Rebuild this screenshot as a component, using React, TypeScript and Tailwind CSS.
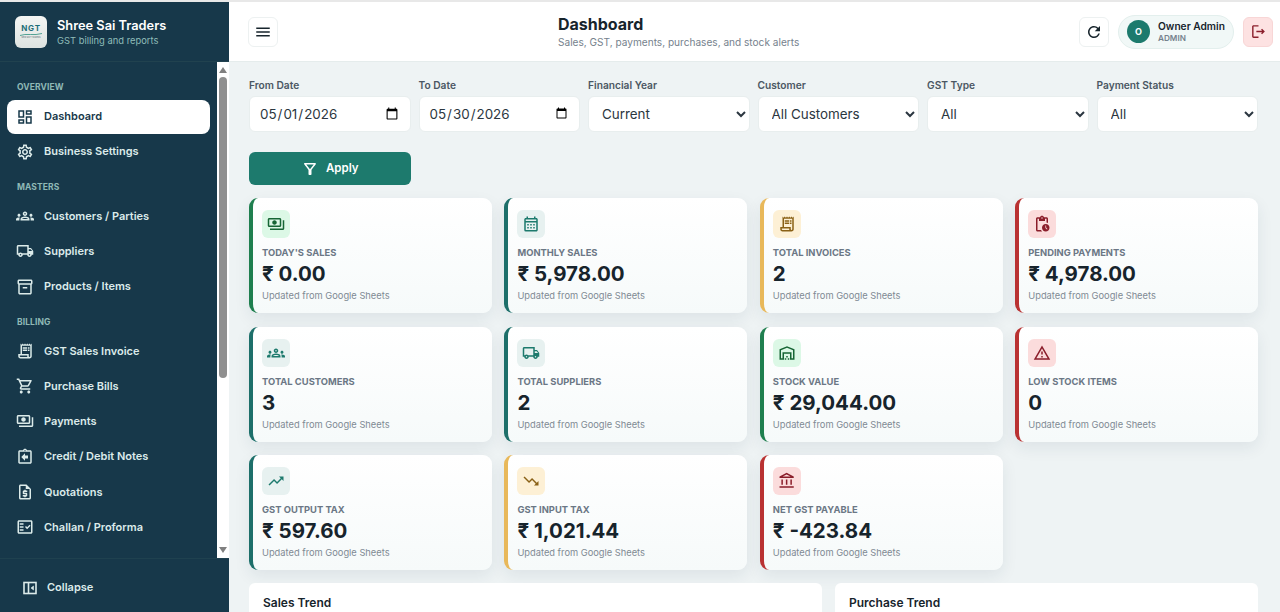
import React from "react";
import {
  MdOutlineDashboard, MdOutlineSettings, MdOutlineGroups, MdOutlineLocalShipping, MdOutlineInventory2,
  MdOutlineReceiptLong, MdOutlineShoppingCart, MdOutlinePayments, MdOutlineAssignmentReturn, MdOutlineRequestQuote,
  MdOutlineFactCheck, MdMenu, MdRefresh, MdOutlineLogout, MdOutlineFilterAlt, MdOutlineCalendarMonth,
  MdOutlinePendingActions, MdOutlineWarehouse, MdOutlineWarningAmber, MdOutlineTrendingUp, MdOutlineTrendingDown,
  MdOutlineAccountBalance,
} from "react-icons/md";

const font = { fontFamily: "Inter, 'Noto Sans', sans-serif" };

function CollapseIcon() {
  return (
    <svg width="16" height="16" viewBox="0 0 16 16" fill="none" stroke="currentColor" strokeWidth="1.6">
      <rect x="2" y="2.5" width="12" height="11" />
      <path d="M6.5 2.5v11" />
      <path d="M11.5 6v4L9 8z" fill="currentColor" strokeWidth="0.6" />
    </svg>
  );
}

type NavItem = { label: string; Icon: React.ComponentType<{ className?: string }>; active?: boolean };

const sections: { title: string; items: NavItem[] }[] = [
  { title: "OVERVIEW", items: [
    { label: "Dashboard", Icon: MdOutlineDashboard, active: true },
    { label: "Business Settings", Icon: MdOutlineSettings },
  ]},
  { title: "MASTERS", items: [
    { label: "Customers / Parties", Icon: MdOutlineGroups },
    { label: "Suppliers", Icon: MdOutlineLocalShipping },
    { label: "Products / Items", Icon: MdOutlineInventory2 },
  ]},
  { title: "BILLING", items: [
    { label: "GST Sales Invoice", Icon: MdOutlineReceiptLong },
    { label: "Purchase Bills", Icon: MdOutlineShoppingCart },
    { label: "Payments", Icon: MdOutlinePayments },
    { label: "Credit / Debit Notes", Icon: MdOutlineAssignmentReturn },
    { label: "Quotations", Icon: MdOutlineRequestQuote },
    { label: "Challan / Proforma", Icon: MdOutlineFactCheck },
  ]},
];

function Logo() {
  return (
    <div className="w-8 h-8 rounded-md bg-gradient-to-b from-[#f4f5f3] to-[#dde3e1] flex flex-col items-center justify-center">
      <span className="text-[8px] leading-[9px] font-bold tracking-[0.8px] text-[#1c6e78]">NGT</span>
      <svg width="22" height="3" viewBox="0 0 22 3" fill="none">
        <path d="M0 2.5C6 0 14 3 22 0.5" stroke="#2f8f7f" strokeWidth="0.8" />
      </svg>
      <span className="text-[2px] leading-[3px] text-[#51646b]">NEW GST TRADERS</span>
    </div>
  );
}

function ScrollBar() {
  return (
    <div className="w-[12px] shrink-0 bg-white flex flex-col items-center">
      <svg className="mt-[5px] shrink-0" width="8" height="6" viewBox="0 0 8 6">
        <path d="M4 0l4 6H0z" fill="#808080" />
      </svg>
      <div className="mt-[4px] w-[8px] h-[301px] rounded-full bg-[#8f8f8f]" />
      <svg className="mt-auto mb-[5px] shrink-0" width="8" height="6" viewBox="0 0 8 6">
        <path d="M4 6L8 0H0z" fill="#808080" />
      </svg>
    </div>
  );
}

function Sidebar() {
  return (
    <aside className="w-[229px] shrink-0 h-[610px] flex flex-col bg-[#17384a] text-[#dcebea]">
      <div className="h-[60px] shrink-0 flex items-center gap-[10px] pl-[15px] border-b border-[#21424f]">
        <Logo />
        <div className="pt-[1px]">
          <div className="text-[12.8px] leading-[17px] font-semibold text-white">Shree Sai Traders</div>
          <div className="text-[9.4px] leading-[14px] text-[#8fbdb9]">GST billing and reports</div>
        </div>
      </div>
      <div className="flex-1 min-h-0 flex">
        <nav className="flex-1 min-w-0 overflow-hidden pt-[19px]">
          {sections.map((s) => (
            <div key={s.title} className="mb-[12px]">
              <div className="pl-[17px] h-[12px] mb-[6.5px] text-[8.5px] leading-[12px] font-bold tracking-[0.1px] text-[#8fb8b6]">{s.title}</div>
              <div className="flex flex-col gap-[1.2px]">
                {s.items.map(({ label, Icon, active }) => (
                  <div
                    key={label}
                    className={
                      "mx-[7px] h-[34px] rounded-lg flex items-center gap-[10px] pl-[9px] text-[11px] font-semibold " +
                      (active ? "bg-white text-[#17384a]" : "text-[#dcebea]")
                    }
                  >
                    <Icon className="text-[18px] shrink-0" />
                    <span>{label}</span>
                  </div>
                ))}
              </div>
            </div>
          ))}
        </nav>
        <ScrollBar />
      </div>
      <div className="h-[54px] shrink-0 border-t border-[#1f414f] flex items-center gap-[9px] pl-[22px] pt-[4px] text-[11px] font-semibold">
        <CollapseIcon />
        <span>Collapse</span>
      </div>
    </aside>
  );
}

function Header() {
  return (
    <header className="h-[60px] shrink-0 bg-white border-b border-[#e5ecec] flex items-center pl-[19px] pr-[7px]">
      <button className="w-[30px] h-[30px] rounded-md border border-[#edf1f1] flex items-center justify-center text-[#17242c]">
        <MdMenu className="text-[18px]" />
      </button>
      <div className="ml-[280px]">
        <div className="text-[16px] leading-[22px] font-bold text-[#17242c]">Dashboard</div>
        <div className="text-[10.1px] leading-[15px] text-[#76828d]">Sales, GST, payments, purchases, and stock alerts</div>
      </div>
      <div className="ml-auto flex items-center">
        <button className="w-[30px] h-[30px] rounded-md border border-[#edf1f1] flex items-center justify-center text-[#17242c]">
          <MdRefresh className="text-[18px]" />
        </button>
        <div className="ml-[9px] h-[34px] w-[116px] rounded-full bg-[#f1f8f7] border border-[#e3efed] flex items-center pl-[8px] gap-[8px]">
          <div className="w-[23px] h-[23px] rounded-full bg-[#1d7a6d] text-white text-[9px] font-bold flex items-center justify-center">O</div>
          <div>
            <div className="text-[10.2px] leading-[13px] font-semibold text-[#17242c]">Owner Admin</div>
            <div className="text-[8.2px] leading-[11px] font-semibold text-[#76828d]">ADMIN</div>
          </div>
        </div>
        <button className="ml-[9px] w-[30px] h-[30px] rounded-md bg-[#fde2e2] border border-[#f8d6d6] flex items-center justify-center text-[#8b1e2b]">
          <MdOutlineLogout className="text-[17px]" />
        </button>
      </div>
    </header>
  );
}

const inputCls = "w-full h-[36px] rounded-md bg-white border border-[#e8eeee] text-[13.4px] text-[#2b3640] outline-none";

function Field({ label, children }: { label: string; children: React.ReactNode }) {
  return (
    <label className="block">
      <div className="text-[10.2px] leading-[14px] font-semibold text-[#4b5763] mb-[4px]">{label}</div>
      {children}
    </label>
  );
}

function Filters() {
  return (
    <div className="grid grid-cols-6 gap-x-2">
      <Field label="From Date"><input type="date" defaultValue="2026-05-01" className={inputCls + " pl-[9px] pr-[9px]"} /></Field>
      <Field label="To Date"><input type="date" defaultValue="2026-05-30" className={inputCls + " pl-[9px] pr-[9px]"} /></Field>
      <Field label="Financial Year"><select className={inputCls + " pl-[9px]"}><option>Current</option></select></Field>
      <Field label="Customer"><select className={inputCls + " pl-[9px]"}><option>All Customers</option></select></Field>
      <Field label="GST Type"><select className={inputCls + " pl-[9px]"}><option>All</option></select></Field>
      <Field label="Payment Status"><select className={inputCls + " pl-[9px]"}><option>All</option></select></Field>
      <button className="mt-[20px] h-[33px] pt-[1px] rounded-md bg-[#1d7a6d] text-white text-[11.5px] font-semibold flex items-center justify-center gap-[7px]">
        <MdOutlineFilterAlt className="text-[18px]" />
        Apply
      </button>
    </div>
  );
}

type Tone = "green" | "teal" | "amber" | "red";

const borderTone: Record<Tone, string> = {
  green: "border-l-[#1f7f4f]",
  teal: "border-l-[#1d6f6a]",
  amber: "border-l-[#e8b85a]",
  red: "border-l-[#b93232]",
};
const iconTone: Record<Tone, string> = {
  green: "bg-[#dcf8e6] text-[#166534]",
  teal: "bg-[#e7f1f0] text-[#1d7a6d]",
  amber: "bg-[#fdf0d5] text-[#8a6116]",
  red: "bg-[#fbdcdc] text-[#8b1e2b]",
};

const cards: { label: string; value: string; tone: Tone; Icon: React.ComponentType<{ className?: string }> }[] = [
  { label: "TODAY'S SALES", value: "₹ 0.00", tone: "green", Icon: MdOutlinePayments },
  { label: "MONTHLY SALES", value: "₹ 5,978.00", tone: "teal", Icon: MdOutlineCalendarMonth },
  { label: "TOTAL INVOICES", value: "2", tone: "amber", Icon: MdOutlineReceiptLong },
  { label: "PENDING PAYMENTS", value: "₹ 4,978.00", tone: "red", Icon: MdOutlinePendingActions },
  { label: "TOTAL CUSTOMERS", value: "3", tone: "teal", Icon: MdOutlineGroups },
  { label: "TOTAL SUPPLIERS", value: "2", tone: "teal", Icon: MdOutlineLocalShipping },
  { label: "STOCK VALUE", value: "₹ 29,044.00", tone: "green", Icon: MdOutlineWarehouse },
  { label: "LOW STOCK ITEMS", value: "0", tone: "red", Icon: MdOutlineWarningAmber },
  { label: "GST OUTPUT TAX", value: "₹ 597.60", tone: "teal", Icon: MdOutlineTrendingUp },
  { label: "GST INPUT TAX", value: "₹ 1,021.44", tone: "amber", Icon: MdOutlineTrendingDown },
  { label: "NET GST PAYABLE", value: "₹ -423.84", tone: "red", Icon: MdOutlineAccountBalance },
];

function Card({ label, value, tone, Icon }: (typeof cards)[number]) {
  return (
    <div className={"h-[115px] rounded-[9px] border-l-4 bg-gradient-to-b from-white to-[#f6fafa] pl-[9px] pt-[12px] shadow-[0_6px_16px_rgba(23,56,74,0.08)] " + borderTone[tone]}>
      <div className={"w-[28px] h-[28px] rounded-md flex items-center justify-center " + iconTone[tone]}>
        <Icon className="text-[18px]" />
      </div>
      <div className="mt-[9px] text-[9.4px] leading-[12px] font-bold text-[#6b7785]">{label}</div>
      <div className="mt-[1px] text-[20.5px] leading-[27px] font-bold text-[#17242c]">{value}</div>
      <div className="mt-[2px] text-[9.3px] leading-[14px] text-[#7f8a94]">Updated from Google Sheets</div>
    </div>
  );
}

function Panel({ title, sub, className }: { title: string; sub: string; className: string }) {
  return (
    <div className={"rounded-t-md bg-white pl-[14px] pt-[12px] pb-5 h-[120px] " + className}>
      <div className="text-[12px] leading-[16px] font-semibold text-[#17242c]">{title}</div>
      <div className="text-[9.5px] leading-[13px] text-[#7f8a94]">{sub}</div>
    </div>
  );
}

export default function App() {
  return (
    <div style={font} className="w-[1280px] h-[612px] overflow-hidden bg-[#eef3f4] flex flex-col">
      <div className="h-[2px] shrink-0 bg-[#e8e8e8]" />
      <div className="flex flex-1 min-h-0">
        <Sidebar />
        <main className="flex-1 min-w-0 flex flex-col">
          <Header />
          <div className="flex-1 min-h-0 overflow-hidden pl-5 pr-[22px] pt-[16px]">
            <Filters />
            <div className="mt-[13px] grid grid-cols-4 gap-x-[12.7px] gap-y-[13.5px]">
              {cards.map((c) => <Card key={c.label} {...c} />)}
            </div>
            <div className="mt-[12.5px] flex gap-[13px]">
              <Panel title="Sales Trend" sub="Monthly sales" className="w-[573px]" />
              <Panel title="Purchase Trend" sub="Supplier bills" className="flex-1" />
            </div>
          </div>
        </main>
      </div>
    </div>
  );
}
